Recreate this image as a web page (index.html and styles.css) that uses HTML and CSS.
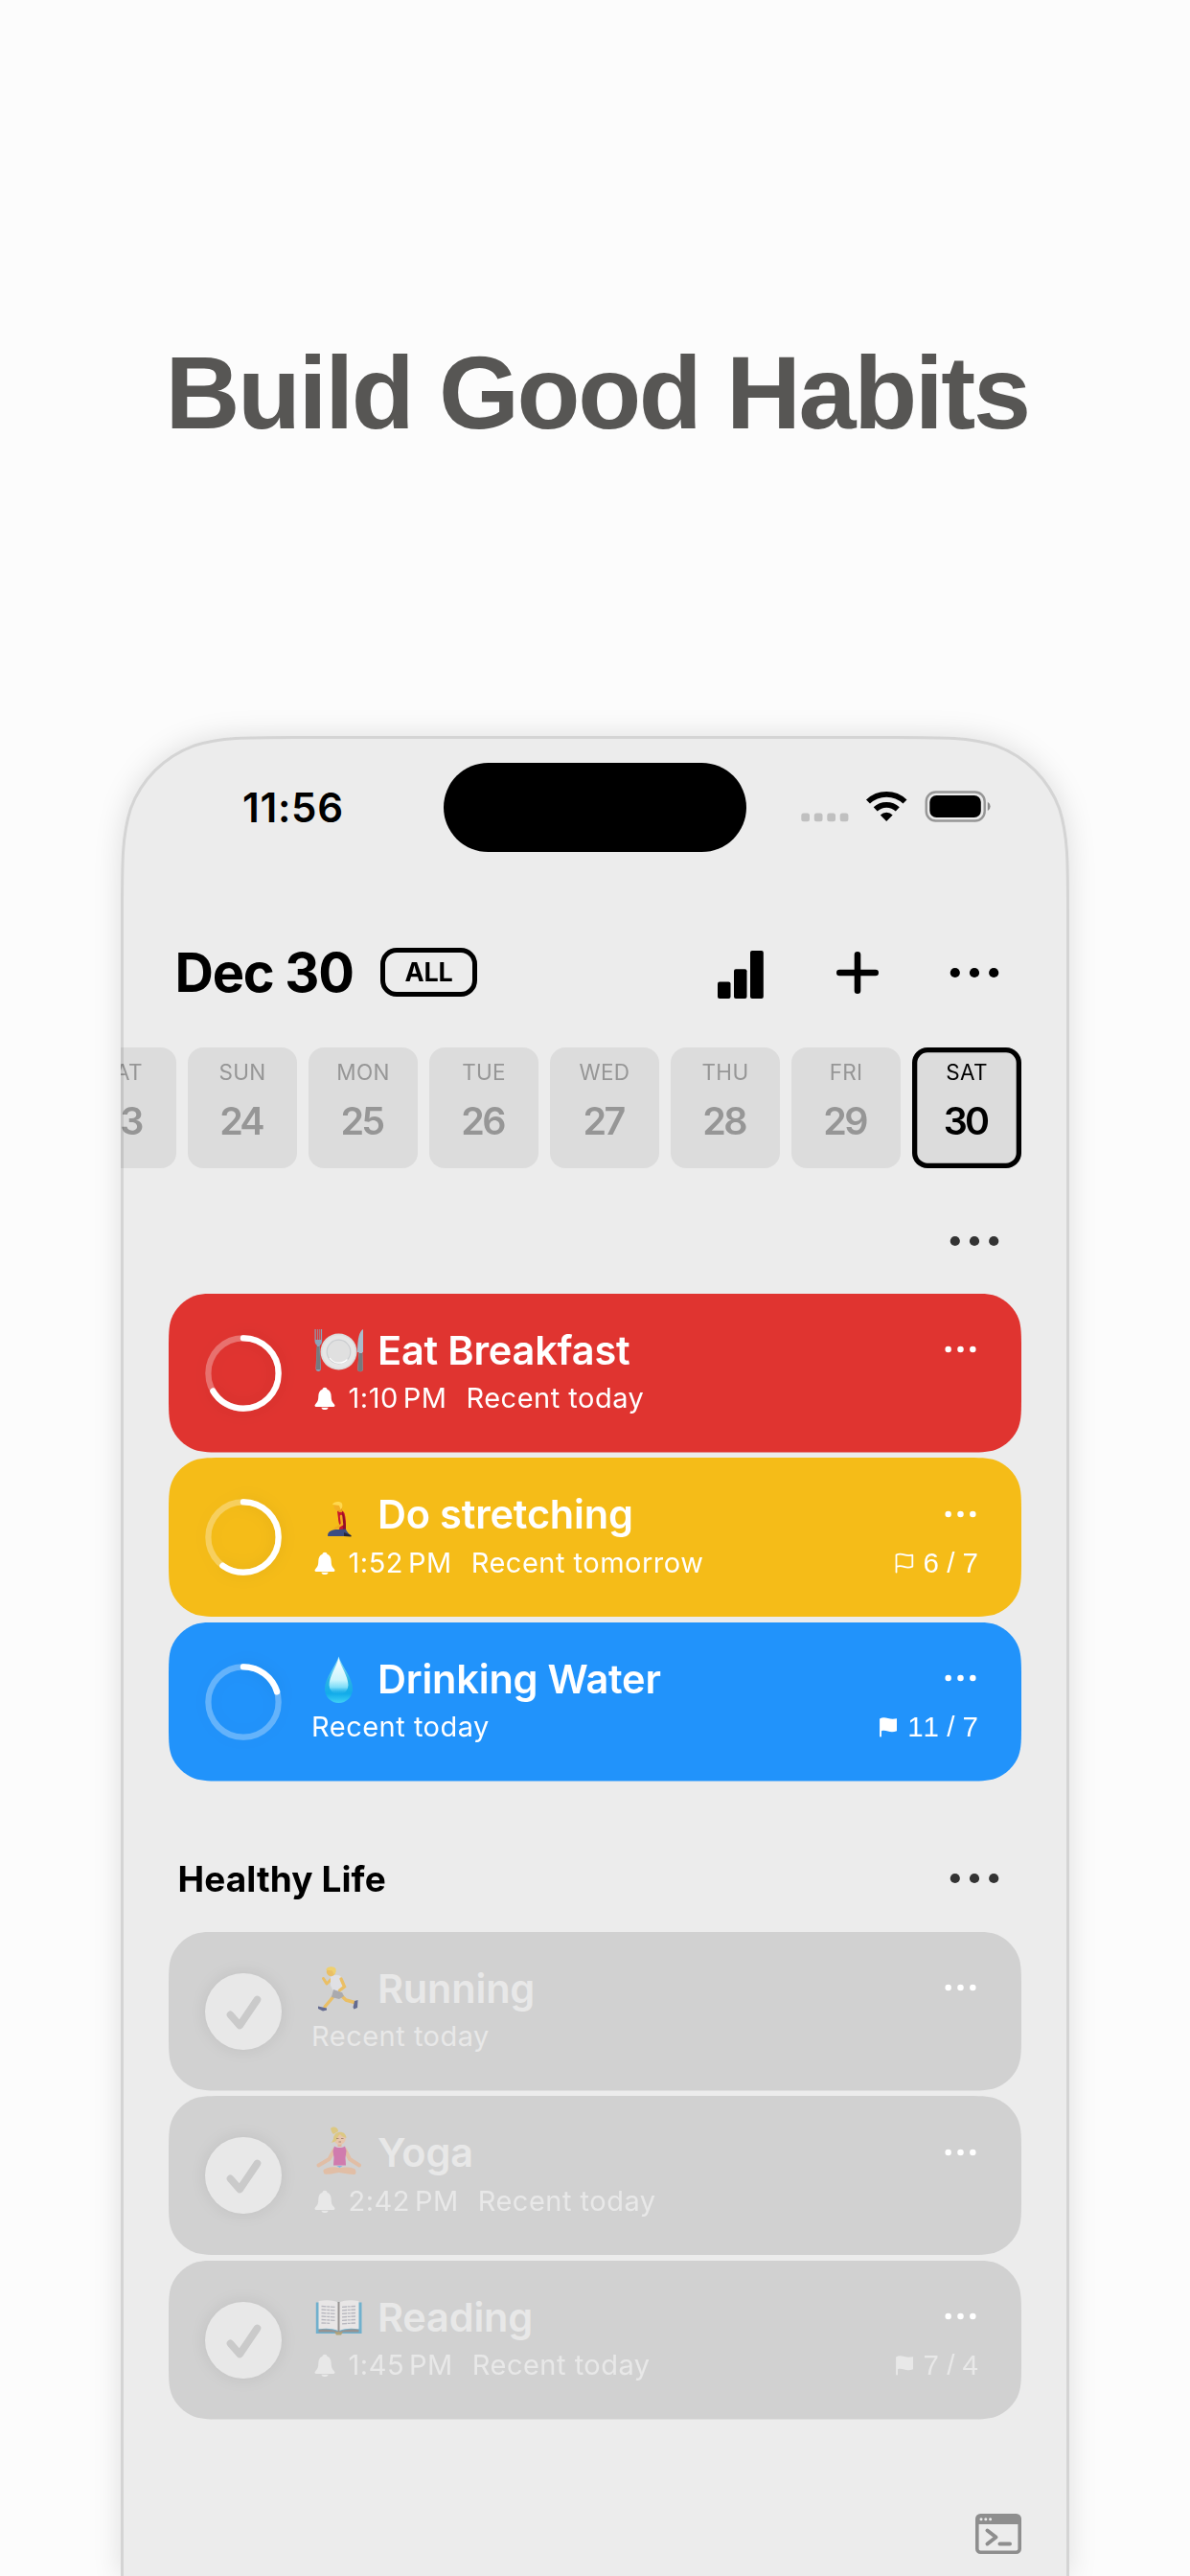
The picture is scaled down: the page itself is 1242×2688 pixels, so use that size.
FILE: index.html
```html
<!DOCTYPE html>
<html lang="en">
<head>
  <meta charset="UTF-8" />
  <meta name="viewport" content="width=device-width, initial-scale=1" />
  <title>Build Good Habits</title>
  <link rel="stylesheet" href="styles.css">
</head>
<body>
  <!-- shared icons -->
  <svg class="sprite" width="0" height="0">
    <symbol id="dots" viewBox="0 0 52 12">
      <circle cx="5.8" cy="6" r="5.1"/><circle cx="26" cy="6" r="5.1"/><circle cx="46.2" cy="6" r="5.1"/>
    </symbol>
    <symbol id="bell" viewBox="0 0 22 24">
      <path d="M11 .8c1.300 0 2.200.7 2.500 1.900 2.900 1.100 4.100 3.700 4.200 7.300.1 4.200.8 5.700 2.700 7.700.9 1 1.200 1.500 1 2.200-.2.700-.8 1-1.700 1H2.300c-.9 0-1.500-.3-1.700-1-.2-.7.1-1.200 1-2.200 1.900-2 2.600-3.500 2.700-7.700.1-3.600 1.300-6.200 4.200-7.300C8.800 1.500 9.700.8 11 .8z"/>
      <path d="M7.400 21.700h7.200c-.3 1.500-1.700 2.400-3.600 2.400s-3.300-.9-3.600-2.400z"/>
    </symbol>
    <symbol id="flag" viewBox="0 0 20 22">
      <path d="M1.100 20.500V2.400C3.500.9 6.500.9 9.800 1.900c3.200 1 5.800 1 9.200.3v13c-3.500 1.400-6.300 1.300-9.300.3-2.600-.8-4.800-.8-6.700-.3v5.300c0 1.300-1.900 1.300-1.900 0z"/>
    </symbol>
    <symbol id="flag-line" viewBox="0 0 20 22">
      <path d="M1.500 20.500V2.500C4 1.200 6.500 1.200 9.800 2.300c3 1 5.500 1 8.500.4v12c-3 1.200-5.700 1.200-8.600.2-3-1-5.500-1-8.200 0" fill="none" stroke="currentColor" stroke-width="1.800" stroke-linecap="round" stroke-linejoin="round"/>
    </symbol>
    <symbol id="check" viewBox="0 0 80 80">
      <circle cx="40" cy="40" r="40"/>
      <path d="M26.500 43.400L36.200 54.500L54.500 27.500" fill="none" stroke="#cacaca" stroke-width="7.600" stroke-linecap="round" stroke-linejoin="round"/>
    </symbol>
  </svg>

  <h1 class="headline">Build Good Habits</h1>

  <main class="phone">
    <div class="screen">
      <div class="status-bar">
        <span class="time">11:56</span>
        <div class="island"></div>
        <svg class="status-icons" viewBox="0 0 199 33">
          <g fill="#c0c0c0">
            <rect x="0.300" y="23.500" width="8.700" height="8.700" rx="2.500"/>
            <rect x="13.800" y="23.500" width="8.700" height="8.700" rx="2.500"/>
            <rect x="27.300" y="23.500" width="8.700" height="8.700" rx="2.500"/>
            <rect x="40.700" y="23.500" width="8.700" height="8.700" rx="2.500"/>
          </g>
          <g fill="none" stroke="#000" stroke-width="5.800">
            <path d="M70 11.500A28 28 0 0 1 108.500 11.500"/>
            <path d="M77.700 19.400A16.800 16.800 0 0 1 100.800 19.400"/>
          </g>
          <path d="M89.200 32L82.800 25.400A9.300 9.300 0 0 1 95.700 25.400Z"/>
          <rect x="130.700" y="1.500" width="61" height="30" rx="10" fill="none" stroke="#969696" stroke-width="2.400"/>
          <rect x="134.300" y="5" width="53.500" height="23" rx="7"/>
          <path d="M194.800 11.700a5.500 5.500 0 0 1 0 9.600z" fill="#8a8a8a"/>
        </svg>
      </div>

      <header class="top">
        <span class="date">Dec 30</span>
        <span class="filter">ALL</span>
        <svg class="icon-bars" viewBox="0 0 48 50">
          <rect x="0" y="32.500" width="13.500" height="17.500" rx="2"/>
          <rect x="17" y="19.300" width="13.500" height="30.700" rx="2"/>
          <rect x="34" y="0" width="13.800" height="50" rx="2"/>
        </svg>
        <svg class="icon-plus" viewBox="0 0 44 44">
          <path d="M22 3.300V40.700M3.300 22H40.700" stroke="#000" stroke-width="6.600" stroke-linecap="round"/>
        </svg>
        <svg class="more"><use href="#dots"/></svg>
      </header>

      <div class="days">
        <div class="day"><span>SAT</span><b>23</b></div>
        <div class="day"><span>SUN</span><b>24</b></div>
        <div class="day"><span>MON</span><b>25</b></div>
        <div class="day"><span>TUE</span><b>26</b></div>
        <div class="day"><span>WED</span><b>27</b></div>
        <div class="day"><span>THU</span><b>28</b></div>
        <div class="day"><span>FRI</span><b>29</b></div>
        <div class="day selected"><span>SAT</span><b>30</b></div>
      </div>

      <section>
        <div class="section-head first">
          <svg class="more"><use href="#dots"/></svg>
        </div>
        <div class="cards">
          <article class="card red">
            <svg class="ring" viewBox="0 0 80 80">
              <circle class="track" cx="40" cy="40" r="36.700"/>
              <circle class="value" cx="40" cy="40" r="36.700" pathLength="100" stroke-dasharray="66.600 100"/>
            </svg>
            <div class="info">
              <div class="name">
                <svg class="emoji" viewBox="0 0 56 56">
                  <path d="M3.500 6v12c0 3 1.500 4 2.400 5L4.500 47c0 4 5.500 4 5.500 0L8.700 23c1.300-1 2.400-2 2.400-5V6l-1.300 0 0 11H8.600V6H7.900v11H6.700V6H6v11H4.700V6z" fill="#8ba3b8"/>
                  <path d="M5.500 24h3l1 24h-4.500z" fill="#77797d"/>
                  <circle cx="28.500" cy="29.500" r="19" fill="#dcdcdc"/>
                  <circle cx="28.500" cy="29.500" r="17.300" fill="#e6e6e6"/>
                  <circle cx="28.500" cy="29.500" r="12.300" fill="#e0e0e0" stroke="#cbcdd0" stroke-width="1.200"/>
                  <path d="M19 36a12 12 0 0 0 18.500 1.500" fill="none" stroke="#fff" stroke-width="1.300"/>
                  <path d="M54 6c-4 2-6 10-6 24h1.500L48.300 48c0 3 5.500 3 5.400 0L53.300 30H54z" fill="#a9bccb"/>
                  <path d="M49.500 31h3.700l.5 17c0 3-5.400 3-5.400 0z" fill="#77797d"/>
                </svg>
                <h2>Eat Breakfast</h2>
              </div>
              <div class="meta"><svg class="bell"><use href="#bell"/></svg><span class="clock">1:10<i></i>PM</span><span class="recent">Recent today</span></div>
            </div>
            <div class="side"><svg class="card-more"><use href="#dots"/></svg></div>
          </article>

          <article class="card yellow">
            <svg class="ring" viewBox="0 0 80 80">
              <circle class="track" cx="40" cy="40" r="36.700"/>
              <circle class="value" cx="40" cy="40" r="36.700" pathLength="100" stroke-dasharray="60 100"/>
            </svg>
            <div class="info">
              <div class="name">
                <svg class="emoji" viewBox="0 0 56 56">
                  <path d="M27 25c3-2 6-1 7.500 2 1.500 5 1.500 10 1.500 17l-7 .5c1-6-1-8-1-12z" fill="#c9182b"/>
                  <path d="M32 25c2.500 4 4 11 4 19l-3 .5z" fill="#92102a"/>
                  <path d="M31 30L32 38.500L25 43" fill="none" stroke="#f0ab21" stroke-width="2.500" stroke-linecap="round"/>
                  <path d="M17 50.500c0-5 5-6.500 11-6.500l8-.5c1 4 4.500 5.500 5.500 7.500H17.500z" fill="#3b4c82"/>
                  <path d="M34 47l7.500 3v1.500L34 51z" fill="#28283a"/>
                  <path d="M28 22h4v4h-3.500z" fill="#e39d1c"/>
                  <circle cx="28" cy="20" r="4.500" fill="#f3af24"/>
                  <path d="M22 18c1-3.500 8.500-4 10-1 1 3 0 5-1.500 6l-1.500-4z" fill="#ffd84e"/>
                </svg>
                <h2>Do stretching</h2>
              </div>
              <div class="meta"><svg class="bell"><use href="#bell"/></svg><span class="clock">1:52<i></i>PM</span><span class="recent">Recent tomorrow</span></div>
            </div>
            <div class="side"><svg class="card-more"><use href="#dots"/></svg><div class="goal"><svg class="flag"><use href="#flag-line"/></svg>6 / 7</div></div>
          </article>

          <article class="card blue">
            <svg class="ring" viewBox="0 0 80 80">
              <circle class="track" cx="40" cy="40" r="36.700"/>
              <circle class="value" cx="40" cy="40" r="36.700" pathLength="100" stroke-dasharray="20.300 100"/>
            </svg>
            <div class="info">
              <div class="name">
                <svg class="emoji" viewBox="0 0 56 56">
                  <defs>
                    <linearGradient id="water" x1="0" y1="0" x2="0" y2="1">
                      <stop offset="0" stop-color="#a8ebfa"/><stop offset=".5" stop-color="#29b3e4"/><stop offset=".8" stop-color="#12abea"/><stop offset="1" stop-color="#3fd0f5"/>
                    </linearGradient>
                    <linearGradient id="shine" x1="0" y1="0" x2="0" y2="1">
                      <stop offset="0" stop-color="#fff"/><stop offset=".6" stop-color="#c9f4fd"/><stop offset=".8" stop-color="#7bdcf8"/><stop offset="1" stop-color="#12abea" stop-opacity="0"/>
                    </linearGradient>
                  </defs>
                  <path d="M28.500 4.500C31 14 43 26 43 38.500a14.500 14.500 0 0 1-29 0C14 26 26 14 28.500 4.500z" fill="url(#water)"/>
                  <path d="M28.500 6C30.500 15 38.500 25 38.500 34.500a10 10 0 0 1-20 0C18.500 25 26.500 15 28.500 6z" fill="url(#shine)"/>
                </svg>
                <h2>Drinking Water</h2>
              </div>
              <div class="meta"><span class="recent">Recent today</span></div>
            </div>
            <div class="side"><svg class="card-more"><use href="#dots"/></svg><div class="goal"><svg class="flag"><use href="#flag"/></svg>11 / 7</div></div>
          </article>
        </div>
      </section>

      <section>
        <div class="section-head">
          <h3>Healthy Life</h3>
          <svg class="more"><use href="#dots"/></svg>
        </div>
        <div class="cards">
          <article class="card done">
            <svg class="check"><use href="#check"/></svg>
            <div class="info">
              <div class="name">
                <svg class="emoji" viewBox="0 0 56 56">
                  <g fill="none" stroke="#f7b52c" stroke-linecap="round" stroke-linejoin="round">
                    <path d="M22 17L16 23L12.500 17.500" stroke-width="3"/>
                    <path d="M24 35L20 40L14 47" stroke-width="3.400"/>
                    <path d="M32 36L36 40L45 42.500" stroke-width="3.400"/>
                  </g>
                  <path d="M20 16c4-3 9-3 11 0l2 8-2 9-8-2-3-6z" fill="#e9e9ee"/>
                  <path d="M31 18L34.500 26L29.500 30" fill="none" stroke="#f7b52c" stroke-width="3.300" stroke-linecap="round"/>
                  <path d="M23 29l9 3 2 4-5 3-8-2z" fill="#96969b"/>
                  <path d="M7 46.500l9 2v2l-4 1-5-2.500zM45 41l3.500-1-.5 8-3.500 1.500-1-2z" fill="#2b376f"/>
                  <circle cx="20.500" cy="10.500" r="4.700" fill="#f7b52c"/>
                  <path d="M15 8.500c1-4 9-4.500 10.500-1 .5 3-.5 5-2 6l-1.500-4z" fill="#ffd03a"/>
                </svg>
                <h2>Running</h2>
              </div>
              <div class="meta"><span class="recent">Recent today</span></div>
            </div>
            <div class="side"><svg class="card-more"><use href="#dots"/></svg></div>
          </article>

          <article class="card done">
            <svg class="check"><use href="#check"/></svg>
            <div class="info">
              <div class="name">
                <svg class="emoji" viewBox="0 0 56 56">
                  <g fill="none" stroke="#eab48f" stroke-linecap="round" stroke-linejoin="round">
                    <path d="M24 25L18.500 35L7.500 41.500" stroke-width="4"/>
                    <path d="M35 25L40 35L50 41.500" stroke-width="4"/>
                    <path d="M15 47.500C24 43 34 49 44 48.500" stroke-width="5"/>
                    <path d="M15 48.500C25 49 34 43 44 47" stroke-width="4.500"/>
                  </g>
                  <path d="M24 21.500c3 2 8 2 11 0l1.500 5-1 7 .5 8H23l.5-8-1-7z" fill="#cf4e9c"/>
                  <path d="M26.500 42h6l-3 2z" fill="#58a7ee"/>
                  <path d="M27.500 17h4v5h-4z" fill="#e8a983"/>
                  <circle cx="29.500" cy="13.500" r="6.300" fill="#f3bf98"/>
                  <path d="M23 14c0-9 13-10 13.500-1-3-1-5.500-2-6.500-4-2 2-3 3-3.500 6C24 18 22 17 20.500 18c1-1 1.500-2 2.500-4zM20 3c3-3 8-1 8 3l-5 3c-1-1-2-2-3-6z" fill="#e2c35a"/>
                  <path d="M26 13.500h2.500M31 13.500h2.500M28.500 17h2.500" stroke="#8f5a3e" stroke-width=".9"/>
                </svg>
                <h2>Yoga</h2>
              </div>
              <div class="meta"><svg class="bell"><use href="#bell"/></svg><span class="clock">2:42<i></i>PM</span><span class="recent">Recent today</span></div>
            </div>
            <div class="side"><svg class="card-more"><use href="#dots"/></svg></div>
          </article>

          <article class="card done">
            <svg class="check"><use href="#check"/></svg>
            <div class="info">
              <div class="name">
                <svg class="emoji" viewBox="0 0 56 56">
                  <path d="M4.800 12.500h47.700V45H4.800z" fill="#3c9fcb"/>
                  <path d="M24 43h9l-2 3.500h-5z" fill="#a08c4c"/>
                  <path d="M7.500 41c8-1 15-.5 21 2.500 6-3 13-3.500 21-2.500v2.500H7.500z" fill="#77716f"/>
                  <path d="M7.500 11c8-1.500 15-1 20.500 1.500V42c-6-2.500-13-2.700-20.500-1.700zM49.500 11c-8-1.500-15-1-20.500 1.500V42c6-2.500 13-2.700 20.500-1.700z" fill="#f4f2f2"/>
                  <path d="M28.500 12v31" stroke="#77716f" stroke-width="2"/>
                  <path d="M10.500 16.500l14 .8M10.500 20l14 .8M10.500 23.500l14 .8M10.500 27l14 .8M10.500 30.500l14 .8M10.500 34l9 .3M32 17.300l14-.8M32 20.800l14-.8M32 24.300l14-.8M32 27.800l14-.8M32 31.300l14-.8M32 34.800l14-.8" stroke="#aaaab5" stroke-width="1.300" stroke-dasharray="5 .7 3 .7"/>
                </svg>
                <h2>Reading</h2>
              </div>
              <div class="meta"><svg class="bell"><use href="#bell"/></svg><span class="clock">1:45<i></i>PM</span><span class="recent">Recent today</span></div>
            </div>
            <div class="side"><svg class="card-more"><use href="#dots"/></svg><div class="goal"><svg class="flag"><use href="#flag"/></svg>7 / 4</div></div>
          </article>
        </div>
      </section>

      <footer class="tools">
        <svg class="terminal" viewBox="0 0 48 42">
          <rect x="1.800" y="1.800" width="44.400" height="38.400" rx="3.500" fill="none" stroke="#8e8e8e" stroke-width="3.600"/>
          <path d="M2 3h44v8H2z" fill="#8e8e8e"/>
          <path d="M12.500 17.500L21.500 24.500L12.500 31.500" fill="none" stroke="#8e8e8e" stroke-width="4" stroke-linecap="round" stroke-linejoin="round"/>
          <path d="M25.500 31.500H36" stroke="#8e8e8e" stroke-width="4" stroke-linecap="round"/>
          <g fill="#ececec"><circle cx="6" cy="5.800" r="1.500"/><circle cx="10.800" cy="5.800" r="1.500"/><circle cx="15.600" cy="5.800" r="1.500"/></g>
        </svg>
      </footer>
    </div>

    <svg class="frame" viewBox="0 0 990 1920">
      <path d="M1.500 2000V181.700C1.500 130 1.500 104 10.300 76C21.500 45.500 45.500 21.500 76 10.300C104 1.500 130 1.500 181.700 1.500H808.300C860 1.500 886 1.500 914 10.300C944.500 21.500 968.500 45.500 979.700 76C988.500 104 988.500 130 988.500 181.700V2000" fill="none" stroke="#000" stroke-opacity=".1" stroke-width="3"/>
    </svg>
  </main>
</body>
</html>
```
FILE: styles.css
```css
* {
  margin: 0;
  padding: 0;
  box-sizing: border-box;
}

body {
  width: 1242px;
  height: 2688px;
  overflow: hidden;
  background: #fcfcfc;
  color: #000;
  font-family: Inter, "Liberation Sans", sans-serif;
}

svg {
  display: block;
  flex-shrink: 0;
  fill: currentColor;
}

.sprite {
  position: absolute;
}

.headline {
  height: 768px;
  padding: 350px 0 0 4px;
  text-align: center;
  font-family: "Liberation Sans", Arial, sans-serif;
  font-size: 108px;
  line-height: 120px;
  letter-spacing: -2.4px;
  color: #575654;
}

/* phone */
.phone {
  position: relative;
  width: 990px;
  height: 1920px;
  margin: 0 auto;
  filter: drop-shadow(0 0 14px rgba(0, 0, 0, 0.12));
}

.screen {
  height: 1920px;
  padding-top: 27.5px;
  background: #ececec;
  clip-path: path("M0 2000V180C0 128 0 102 8.800 74.500C20 44 44 20 74.500 8.800C102 0 128 0 180 0H810C862 0 888 0 915.500 8.800C946 20 970 44 981.200 74.500C990 102 990 128 990 180V2000Z");
}

.frame {
  position: absolute;
  top: 0;
  left: 0;
  width: 990px;
  height: 1920px;
  pointer-events: none;
}

/* status bar */
.status-bar {
  display: flex;
  align-items: center;
  height: 93px;
}

.time {
  width: 337px;
  padding-left: 127px;
  font-size: 42px;
  font-weight: 600;
  letter-spacing: 0.7px;
}

.island {
  width: 316px;
  height: 93px;
  border-radius: 47px;
  background: #000;
}

.status-icons {
  width: 199px;
  height: 33px;
  margin-left: 57px;
  margin-top: -2px;
}

/* header */
.top {
  display: flex;
  align-items: center;
  height: 52px;
  margin-top: 100px;
  padding: 0 73px 0 56.5px;
}

.date {
  width: 214.5px;
  font-size: 56px;
  font-weight: 700;
  letter-spacing: -1.3px;
  white-space: nowrap;
}

.filter {
  width: 101px;
  height: 51px;
  border: 5px solid #000;
  border-radius: 17px;
  font-size: 27px;
  font-weight: 700;
  line-height: 41px;
  letter-spacing: -0.3px;
  text-align: center;
}

.icon-bars {
  width: 48px;
  height: 50px;
  margin-left: 251px;
  margin-top: 4px;
}

.icon-plus {
  width: 44px;
  height: 44px;
  margin-left: 75.5px;
}

.more {
  width: 52px;
  height: 12px;
  margin-left: auto;
}

/* days */
.days {
  display: flex;
  gap: 12px;
  margin-top: 52px;
  margin-left: -56px;
}

.day {
  display: flex;
  flex-direction: column;
  flex-shrink: 0;
  align-items: center;
  gap: 13px;
  width: 114px;
  height: 126px;
  padding-top: 12px;
  border-radius: 16px;
  background: #dcdcdc;
  color: #969696;
}

.day span {
  font-size: 22.5px;
  line-height: 28px;
  letter-spacing: 0.3px;
}

.day b {
  margin-left: -3px;
  font-size: 39.5px;
  font-weight: 600;
  line-height: 48px;
  letter-spacing: -2.8px;
}

.day.selected {
  box-shadow: inset 0 0 0 5.3px #000;
  color: #000;
}

/* sections */
.section-head {
  display: flex;
  align-items: center;
  height: 53px;
  margin: 75px 73px 29px 59.5px;
}

.section-head.first {
  height: 52px;
  margin-top: 50px;
}

.section-head .more {
  color: #333;
}

h3 {
  font-size: 37px;
  font-weight: 700;
  letter-spacing: 0.1px;
}

.cards {
  display: flex;
  flex-direction: column;
  gap: 5.5px;
  padding: 0 50px;
}

.card {
  display: flex;
  align-items: center;
  height: 166px;
  padding: 0 45px 0 38px;
  color: #fff;
  clip-path: path("M61 0H829C847 0 855 0 863.200 2.800C874 6.700 883.300 16 887.200 26.800C890 35 890 43 890 61V105C890 123 890 131 887.200 139.200C883.300 150 874 159.300 863.200 163.200C855 166 847 166 829 166H61C43 166 35 166 26.800 163.200C16 159.300 6.700 150 2.800 139.200C0 131 0 123 0 105V61C0 43 0 35 2.800 26.800C6.700 16 16 6.700 26.800 2.800C35 0 43 0 61 0Z");
}

.red { background: #e03430; }
.yellow { background: #f5bc18; }
.blue { background: #2193fb; }

.done {
  background: #d1d1d1;
  color: #e8e8e8;
}

.ring,
.check {
  width: 80px;
  height: 80px;
  overflow: visible;
  filter: drop-shadow(0 0 8px rgba(0, 0, 0, 0.08));
}

.ring {
  transform: rotate(-90deg);
}

.ring circle {
  fill: none;
  stroke: #fff;
  stroke-width: 6.3;
}

.ring .track {
  stroke-opacity: 0.3;
}

.ring .value {
  stroke-linecap: round;
}

.info {
  align-self: flex-start;
  margin-left: 31px;
  padding-top: 34px;
}

.name {
  display: flex;
  align-items: center;
  height: 50px;
}

.emoji {
  width: 56px;
  height: 56px;
  margin-right: 13px;
}

.done .emoji {
  opacity: 0.65;
}

h2 {
  font-size: 41.5px;
  font-weight: 600;
  line-height: 50px;
  letter-spacing: -0.2px;
  white-space: nowrap;
}

.meta {
  display: flex;
  align-items: center;
  height: 36px;
  margin-top: 7.5px;
  font-size: 29px;
  line-height: 36px;
  letter-spacing: 0.5px;
  white-space: nowrap;
}

.bell {
  width: 22px;
  height: 24px;
  margin: 0 13.5px 0 3px;
}

.clock i {
  display: inline-block;
  width: 5px;
}

.clock + .recent {
  margin-left: 20px;
}

.side {
  display: flex;
  flex-direction: column;
  align-items: flex-end;
  align-self: flex-start;
  margin-left: auto;
  padding-top: 54.5px;
}

.card-more {
  width: 33px;
  height: 8px;
  margin-right: 2px;
  color: #fff;
}

.goal {
  display: flex;
  align-items: center;
  height: 36px;
  margin-top: 29px;
  font-family: "Liberation Sans", Arial, sans-serif;
  font-size: 29.5px;
  font-kerning: none;
  white-space: nowrap;
}

.flag {
  width: 20px;
  height: 22px;
  margin-right: 10px;
}

.tools {
  display: flex;
  justify-content: flex-end;
  margin-top: 98px;
  padding-right: 50.5px;
}

.terminal {
  width: 48px;
  height: 42px;
}
```
